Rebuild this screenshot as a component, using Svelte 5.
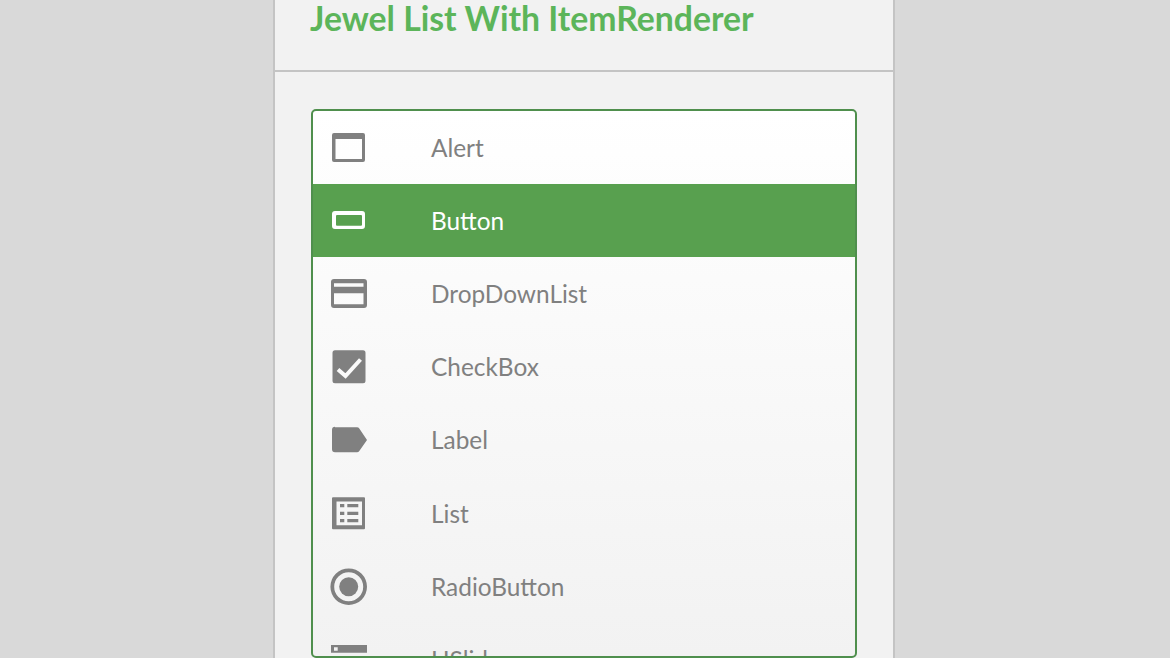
<script lang="ts">
const items = [
    { label: "Alert", icon: "alert" },
    { label: "Button", icon: "button" },
    { label: "DropDownList", icon: "dropdown" },
    { label: "CheckBox", icon: "checkbox" },
    { label: "Label", icon: "label" },
    { label: "List", icon: "list" },
    { label: "RadioButton", icon: "radio" },
    { label: "HSlider", icon: "slider" },
];
const selected = "Button";
</script>

<div class="page">
    <section class="panel">
        <header class="head">
            <h1>Jewel List With ItemRenderer</h1>
        </header>
        <div class="body">
            <ul class="list">
                {#each items as item}
                    <li class="row" class:selected={item.label === selected}>
                        <svg class="icon" viewBox="0 0 38 39" width="38" height="39" aria-hidden="true">
                            {#if item.icon === "alert"}
                                <path fill-rule="evenodd" d="M4 5h29a2 2 0 0 1 2 2v25a2 2 0 0 1-2 2h-29a2 2 0 0 1-2-2v-25a2 2 0 0 1 2-2zM5.500 11v20h26.500v-20z" />
                            {:else if item.icon === "button"}
                                <path fill-rule="evenodd" d="M5 10h27a3 3 0 0 1 3 3v12a3 3 0 0 1-3 3h-27a3 3 0 0 1-3-3v-12a3 3 0 0 1 3-3zM7 14a1 1 0 0 0-1 1v8.700a1 1 0 0 0 1 1h24a1 1 0 0 0 1-1v-8.700a1 1 0 0 0-1-1z" />
                            {:else if item.icon === "dropdown"}
                                <path fill-rule="evenodd" d="M4 5h30a3 3 0 0 1 3 3v23a3 3 0 0 1-3 3h-30a3 3 0 0 1-3-3v-23a3 3 0 0 1 3-3zM4 9.300v3.400h29.500v-3.400zM4 19.300v11h29.500v-11z" />
                            {:else if item.icon === "checkbox"}
                                <path d="M5 3.300h28a2.500 2.500 0 0 1 2.500 2.500v28a2.500 2.500 0 0 1-2.500 2.500h-28a2.500 2.500 0 0 1-2.500-2.500v-28a2.500 2.500 0 0 1 2.500-2.500z" />
                                <path class="check" d="M8 22.500l7.500 6.500 15-16.500" />
                            {:else if item.icon === "label"}
                                <path d="M5 7.300h22c1 0 1.700.4 2.300 1.200l7.700 11.500-7.700 11c-.6.800-1.300 1.200-2.300 1.200h-22a3 3 0 0 1-3-3v-19.400a3 3 0 0 1 3-3z" />
                            {:else if item.icon === "list"}
                                <path fill-rule="evenodd" d="M3 3.300h31a1 1 0 0 1 1 1v30a1 1 0 0 1-1 1h-31a1 1 0 0 1-1-1v-30a1 1 0 0 1 1-1zM6.500 7.500v23.700h25.500v-23.700zM10 10h4.300v3.300h-4.300zM17.300 10h11v3.300h-11zM10 17.700h4.300v3.300h-4.300zM17.300 17.700h11v3.300h-11zM10 25h4.300v3.300h-4.300zM17.300 25h11v3.300h-11z" />
                            {:else if item.icon === "radio"}
                                <path fill-rule="evenodd" d="M18.700 1.400a18.300 18.300 0 1 1 0 36.600 18.300 18.300 0 0 1 0-36.600zM18.700 5.200a14.500 14.500 0 1 0 0 29 14.500 14.500 0 0 0 0-29z" />
                                <circle cx="18.700" cy="19.700" r="9.500" />
                            {:else}
                                <path fill-rule="evenodd" d="M1 5h36v7.700h-36zM4 7.300v3.400h3.700v-3.400z" />
                            {/if}
                        </svg>
                        <span class="label">{item.label}</span>
                    </li>
                {/each}
            </ul>
        </div>
    </section>
</div>

<style>
:global(body) {
    margin: 0;
    background: #d9d9d9;
}

.page {
    height: 658px;
    overflow: hidden;
    padding-left: 273px;
    font-family: Lato, "Liberation Sans", sans-serif;
}

.panel {
    box-sizing: border-box;
    width: 622px;
    height: 700px;
    background: #f2f2f2;
    border-left: 2px solid #c4c4c4;
    border-right: 2px solid #c4c4c4;
}

.head {
    box-sizing: border-box;
    height: 72px;
    padding: 0 35px;
    border-bottom: 2px solid #c4c4c4;
}

h1 {
    margin: 0;
    font-size: 33.75px;
    line-height: 36px;
    font-weight: 700;
    color: #5cb55a;
}

.body {
    padding: 37px 36px 0;
}

.list {
    box-sizing: border-box;
    height: 549px;
    margin: 0;
    padding: 0;
    list-style: none;
    overflow: hidden;
    background: linear-gradient(#ffffff, #f2f2f2);
    border: 2px solid #4f8f4d;
    border-radius: 5px;
}

.row {
    display: flex;
    align-items: center;
    height: 73.11px;
    padding-left: 17px;
    color: #808080;
}

.row.selected {
    background: #58a04f;
    color: #ffffff;
}

.icon {
    flex: none;
    fill: currentColor;
}

.check {
    fill: none;
    stroke: #fafafa;
    stroke-width: 4;
}

.label {
    margin-left: 63px;
    font-size: 24.4px;
}
</style>
